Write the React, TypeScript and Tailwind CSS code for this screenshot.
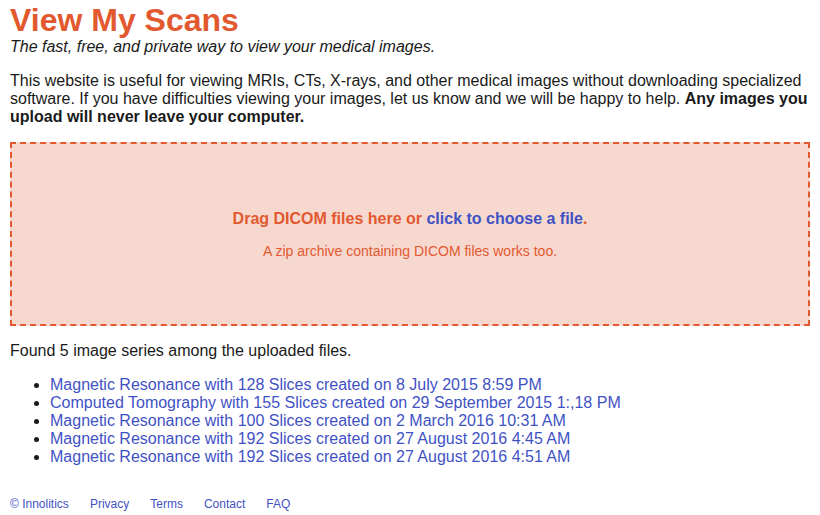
import React from "react";

const series = [
  "Magnetic Resonance with 128 Slices created on 8 July 2015 8:59 PM",
  "Computed Tomography with 155 Slices created on 29 September 2015 1:,18 PM",
  "Magnetic Resonance with 100 Slices created on 2 March 2016 10:31 AM",
  "Magnetic Resonance with 192 Slices created on 27 August 2016 4:45 AM",
  "Magnetic Resonance with 192 Slices created on 27 August 2016 4:51 AM",
];

const footerLinks = ["© Innolitics", "Privacy", "Terms", "Contact", "FAQ"];

export default function App() {
  return (
    <div className="min-h-screen bg-white px-[10px] pt-[2px] text-[#1a1a1a] font-['Liberation_Sans',Arial,sans-serif]">
      <h1 className="text-[32px] leading-[36px] font-bold text-[#e2592f]">View My Scans</h1>
      <p className="text-[16px] leading-[18px] italic">
        The fast, free, and private way to view your medical images.
      </p>

      <p className="mt-[16px] text-[16px] leading-[18px]">
        This website is useful for viewing MRIs, CTs, X-rays, and other medical images without downloading specialized
        software. If you have difficulties viewing your images, let us know and we will be happy to help.{" "}
        <b>Any images you upload will never leave your computer.</b>
      </p>

      <div className="mt-[16px] h-[184px] border-2 border-dashed border-[#e2592f] bg-[#f7d8cf] flex flex-col items-center justify-center text-[#e2592f]">
        <p className="text-[16px] leading-[18px] font-bold">
          Drag DICOM files here or <span className="text-[#3f52c4] cursor-pointer">click to choose a file</span>.
        </p>
        <p className="mt-[15px] text-[14px] leading-[16px]">A zip archive containing DICOM files works too.</p>
      </div>

      <p className="mt-[16px] text-[16px] leading-[18px]">Found 5 image series among the uploaded files.</p>

      <ul className="mt-[16px] list-disc pl-[40px] text-[16px] leading-[18px]">
        {series.map((s, i) => (
          <li key={i}>
            <a className="text-[#3f52c4] cursor-pointer">{s}</a>
          </li>
        ))}
      </ul>

      <div className="mt-[29px] flex gap-[21px] text-[12px] text-[#3f52c4]">
        {footerLinks.map((l) => (
          <a key={l} className="cursor-pointer">{l}</a>
        ))}
      </div>
    </div>
  );
}
